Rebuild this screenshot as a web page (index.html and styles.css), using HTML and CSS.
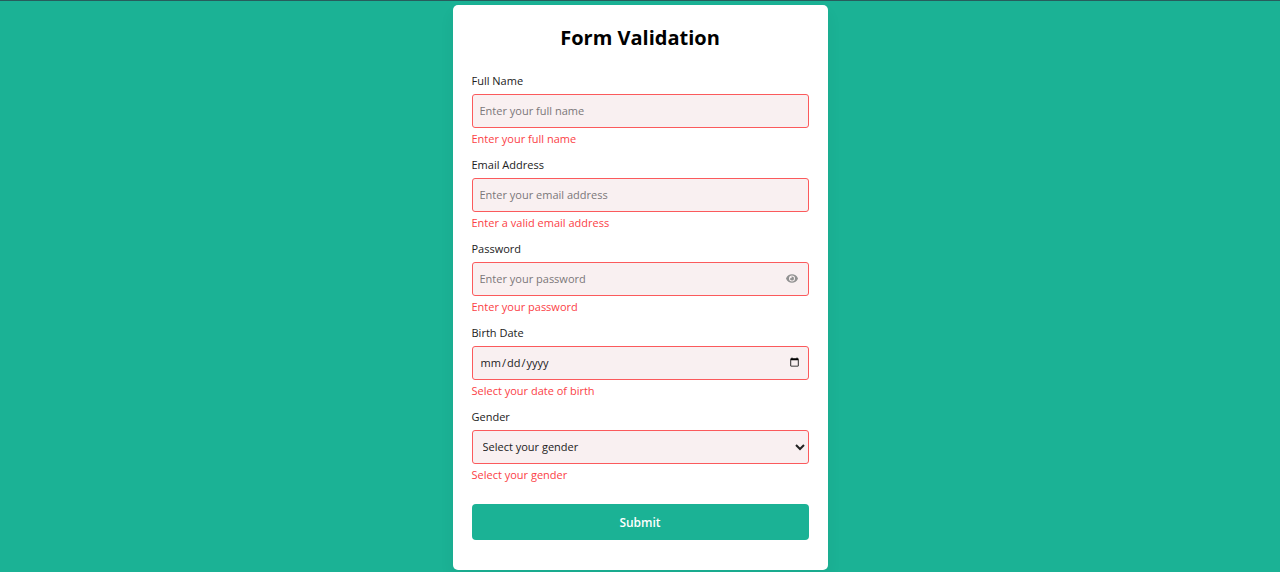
FILE: index.html
```html
<!DOCTYPE html>
<html lang="en">
<head>
<meta charset="utf-8">
<title>Form Validation</title>
<link rel="stylesheet" href="styles.css">
</head>
<body>
<form class="form" novalidate>
  <h2 class="title">Form Validation</h2>
  <div class="group">
    <label for="fullname">Full Name</label>
    <input class="control" type="text" id="fullname" placeholder="Enter your full name">
    <small class="error">Enter your full name</small>
  </div>
  <div class="group">
    <label for="email">Email Address</label>
    <input class="control" type="text" id="email" placeholder="Enter your email address">
    <small class="error">Enter a valid email address</small>
  </div>
  <div class="group">
    <label for="password">Password</label>
    <div class="field">
      <input class="control" type="password" id="password" placeholder="Enter your password">
      <button class="toggle" type="button" aria-label="Show password">
        <svg viewBox="0 0 576 512" width="12" height="11"><path fill="currentColor" fill-rule="evenodd" d="M288 48C160 48 54 122 4 241c-4 10-4 20 0 30C54 390 160 464 288 464s234-74 284-193c4-10 4-20 0-30C522 122 416 48 288 48zM288 112a144 144 0 1 1 0 288a144 144 0 1 1 0-288z"/><path fill="currentColor" d="M288 160a96 96 0 1 1-93 72c14 12 32 16 49 10c26-9 36-36 22-60c-4-8-7-14-3-19c8-2 16-3 25-3z"/></svg>
      </button>
    </div>
    <small class="error">Enter your password</small>
  </div>
  <div class="group">
    <label for="date">Birth Date</label>
    <input class="control date" type="date" id="date">
    <small class="error">Select your date of birth</small>
  </div>
  <div class="group">
    <label for="gender">Gender</label>
    <select class="control select" id="gender">
      <option selected disabled>Select your gender</option>
      <option>Male</option>
      <option>Female</option>
      <option>Other</option>
    </select>
    <small class="error">Select your gender</small>
  </div>
  <button class="submit" type="submit">Submit</button>
</form>
</body>
</html>
```

FILE: styles.css
```css
* {
  box-sizing: border-box;
  margin: 0;
  padding: 0;
  font-family: "Open Sans", sans-serif;
}

body {
  min-height: 100vh;
  padding: 4px 8px 2px;
  border-top: 1px solid #285c5c;
  background: #1bb295;
  display: flex;
  align-items: flex-start;
  justify-content: center;
}

.form {
  width: 100%;
  max-width: 375px;
  padding: 18px 19px 30px;
  border-radius: 5px;
  background: #fff;
  box-shadow: 0 8px 16px rgba(0, 0, 0, 0.05);
}

.title {
  margin-bottom: 20px;
  font-size: 20px;
  line-height: 30px;
  font-weight: 700;
  text-align: center;
}

.group {
  display: flex;
  flex-direction: column;
  margin-bottom: 10px;
}

.group label {
  margin-bottom: 6px;
  font-size: 11px;
  line-height: 15px;
  color: #222;
}

.field {
  position: relative;
  display: flex;
}

.control {
  width: 100%;
  height: 34px;
  padding: 0 7px 2px;
  border: 1px solid #fb5a5c;
  border-radius: 3px;
  outline: none;
  background: #f9f0f1;
  font-size: 11px;
  color: #222;
}

.control::placeholder {
  color: #7b7779;
}

.date {
  padding-right: 6px;
}

.select {
  padding: 0 6px 2px;
}

.toggle {
  position: absolute;
  top: 0;
  right: 11px;
  height: 100%;
  padding-bottom: 2px;
  display: flex;
  align-items: center;
  border: 0;
  background: none;
  color: #919191;
  cursor: pointer;
}

.error {
  margin-top: 2px;
  font-size: 11px;
  line-height: 17px;
  color: #fb4146;
}

.submit {
  display: block;
  width: 100%;
  height: 36px;
  margin-top: 21px;
  border: 0;
  border-radius: 4px;
  background: #1bb295;
  color: #fff;
  font-size: 12px;
  font-weight: 600;
  cursor: pointer;
}
```
